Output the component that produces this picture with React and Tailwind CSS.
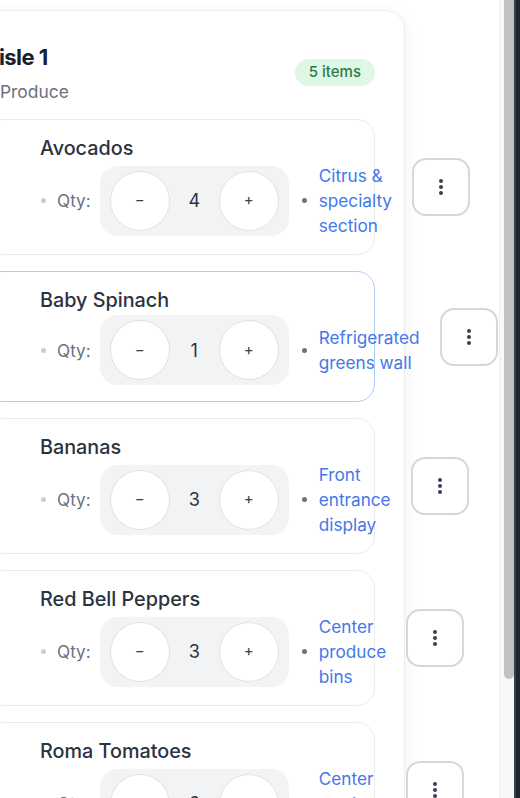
import React from "react";

const items = [
  { name: "Avocados", qty: 4, loc: "Citrus & specialty section" },
  { name: "Baby Spinach", qty: 1, loc: "Refrigerated greens wall", active: true },
  { name: "Bananas", qty: 3, loc: "Front entrance display" },
  { name: "Red Bell Peppers", qty: 3, loc: "Center produce bins" },
  { name: "Roma Tomatoes", qty: 6, loc: "Center produce bins" },
];

function Row({ item }) {
  return (
    <div
      className={
        "flex items-center rounded-[18px] border bg-white py-4 pl-[55px] pr-4 " +
        (item.active ? "border-[#a9cdfb]" : "border-[#ececee]")
      }
    >
      <div className="flex shrink-0 flex-col">
        <div className="text-[19.8px] font-medium leading-6 text-[#2b3240]">{item.name}</div>
        <div className="mt-[3px] flex items-center">
          <span className="ml-[1px] h-[5px] w-[5px] rounded-full bg-[#c9ccd1]" />
          <span className="ml-[11px] text-[17.2px] leading-[25px] text-[#6b7280]">Qty:</span>
          <div className="ml-[9px] flex items-center rounded-[18px] bg-[#f2f3f5] px-[10px] py-[5px]">
            <button className="flex h-[60px] w-[60px] items-center justify-center rounded-full border border-[#dfe1e5] bg-white text-[15px] text-[#374151]">
              −
            </button>
            <span className="mx-3 w-[25px] text-center text-[18px] text-[#2b3240]">{item.qty}</span>
            <button className="flex h-[60px] w-[60px] items-center justify-center rounded-full border border-[#dfe1e5] bg-white text-[15px] text-[#374151]">
              +
            </button>
          </div>
          <span className="ml-[13px] h-[5px] w-[5px] shrink-0 rounded-full bg-[#6b7280]" />
          <span className="ml-[12px] w-min text-[17.2px] leading-[25px] text-[#4378ec]">{item.loc}</span>
        </div>
      </div>
      <button className="ml-5 flex h-[58px] w-[58px] shrink-0 flex-col items-center justify-center gap-[2px] rounded-[14px] border-2 border-[#d5d7db] bg-white">
        <span className="h-[4px] w-[4px] rounded-full bg-[#374151]" />
        <span className="h-[4px] w-[4px] rounded-full bg-[#374151]" />
        <span className="h-[4px] w-[4px] rounded-full bg-[#374151]" />
      </button>
    </div>
  );
}

export default function App() {
  return (
    <div
      className="flex h-[798px] w-[520px] overflow-hidden bg-white"
      style={{ fontFamily: "Inter, 'Noto Sans', sans-serif" }}
    >
      <div className="h-full w-[499px] shrink-0 overflow-hidden bg-white">
        <div className="ml-[-46px] mt-[10px] w-[451px] rounded-[20px] border border-[#ededed] bg-white px-[29px] pt-[30px] shadow-[0_4px_18px_rgba(0,0,0,0.06)]">
          <div className="flex items-center justify-between">
            <div className="flex flex-col">
              <h2 className="ml-[-1px] text-[22px] font-bold leading-8 tracking-tight text-[#1a202c]">Aisle 1</h2>
              <div className="mt-[6px] flex items-center gap-1">
                <span className="h-[12px] w-[12px] rounded-full bg-[#e5e7eb]" />
                <span className="text-[17.4px] leading-[25px] text-[#6b7280]">Produce</span>
              </div>
            </div>
            <span className="flex h-[27px] items-center rounded-full bg-[#dff7e6] px-[14px] text-[15px] font-medium text-[#2f7a47]">
              5 items
            </span>
          </div>
          <div className="mt-[15px] flex flex-col gap-4 pb-6">
            {items.map((it) => (
              <Row key={it.name} item={it} />
            ))}
          </div>
        </div>
      </div>
      <div className="flex h-full w-[15px] shrink-0 border-l border-[#ececec] bg-[#f8f8f8] pl-[4px]">
        <div className="h-[679px] w-[10px] rounded-b-[5px] bg-[#c1c1c1]" />
      </div>
      <div className="h-full w-[6px] shrink-0 border-l-2 border-[#3a4050] bg-[#1f2433]" />
    </div>
  );
}
